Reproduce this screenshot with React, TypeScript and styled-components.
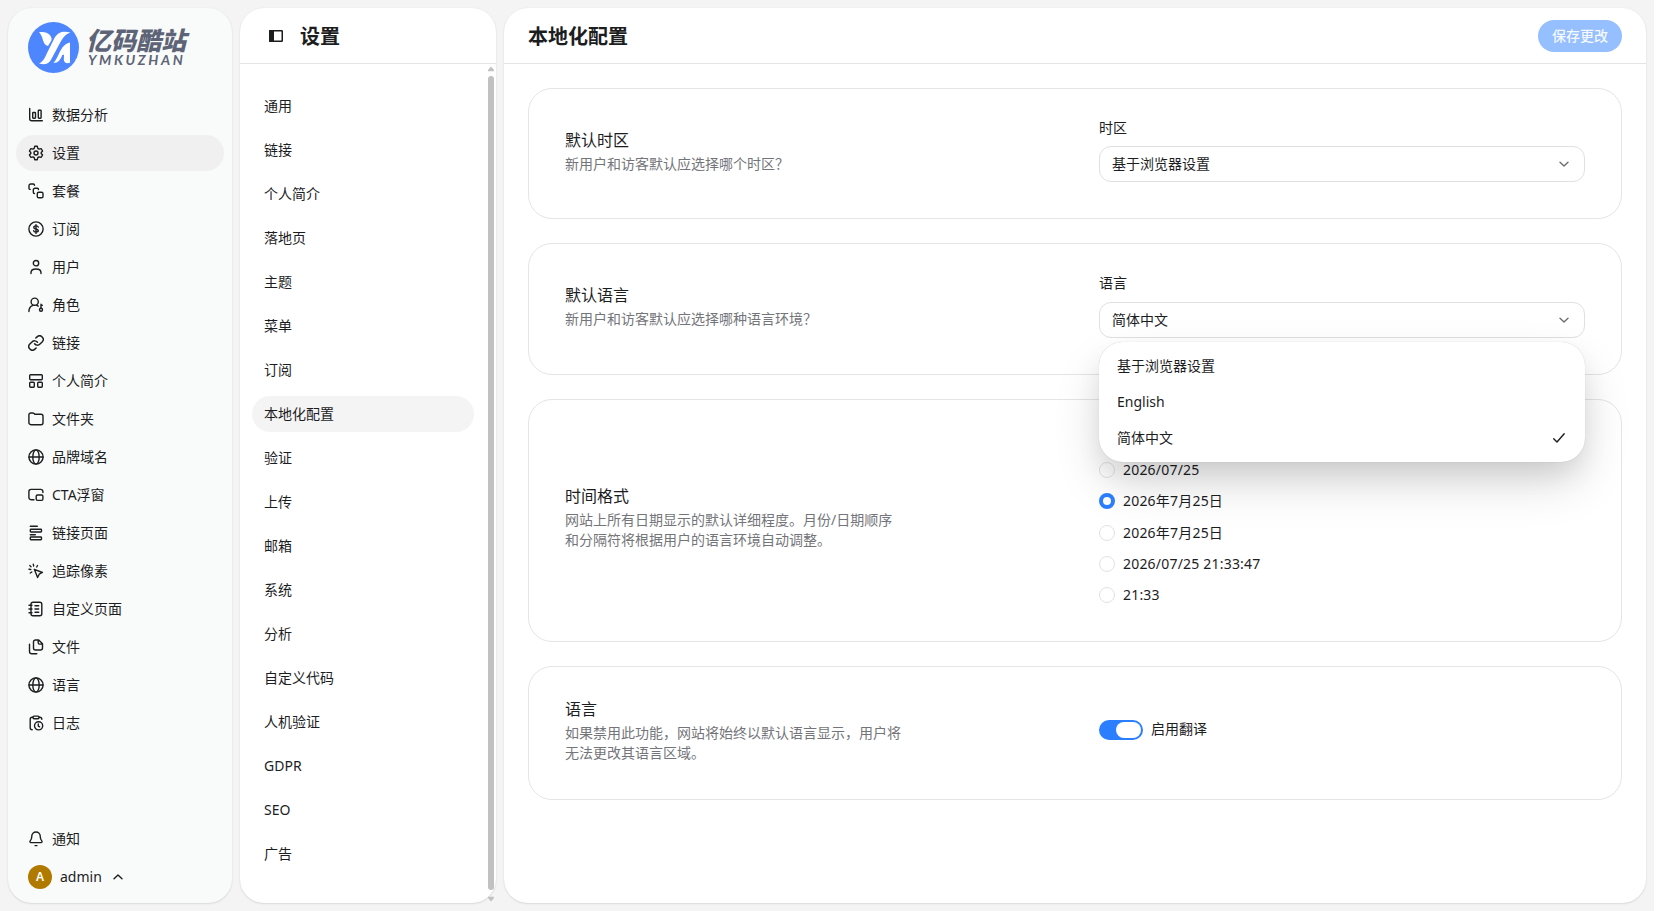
import React from 'react';
import styled, { createGlobalStyle } from 'styled-components';

const GlobalStyle = createGlobalStyle`
  * { box-sizing: border-box; }
  body {
    margin: 0;
    background: #fff;
    color: #1c1d1f;
    font-family: "Noto Sans", "Noto Sans CJK SC", sans-serif;
    font-size: 14px;
    line-height: 20px;
    overflow: hidden;
  }
  button { font: inherit; border: 0; background: none; padding: 0; color: inherit; }
`;

const Shell = styled.div`
  display: flex;
  gap: 8px;
  width: 1654px;
  height: 911px;
  padding: 8px;
  background: #f4f4f4;
`;

const Panel = styled.section<{ $tint?: boolean; $width?: number }>`
  display: flex;
  flex-direction: column;
  ${(p) => (p.$width ? `flex: 0 0 ${p.$width}px;` : 'flex: 1; min-width: 0;')}
  border-radius: 24px;
  background: ${(p) => (p.$tint ? '#f9fbfa' : '#fff')};
  box-shadow: 0 1px 2px rgba(0, 0, 0, 0.1), 0 0 2px rgba(0, 0, 0, 0.06);
`;

/* ---------- primary sidebar ---------- */

const Brand = styled.div`
  display: flex;
  gap: 7px;
  height: 81px;
  padding: 14px 0 0 20px;
`;

const BrandWords = styled.div`
  color: #5d6477;
  padding-top: 4px;
  white-space: nowrap;
`;

const BrandName = styled.div`
  font: italic 900 25px/26px "Noto Sans CJK SC", sans-serif;
`;

const BrandLatin = styled.div`
  font: italic 700 14px/14px Lato, sans-serif;
  letter-spacing: 2.6px;
  padding: 1px 0 0 2px;
`;

const Nav = styled.nav`
  display: flex;
  flex-direction: column;
  gap: 2px;
  padding: 8px 8px 0;
`;

const NavItem = styled.a<{ $active?: boolean }>`
  display: flex;
  align-items: center;
  gap: 8px;
  height: 36px;
  padding: 0 12px;
  border-radius: 18px;
  background: ${(p) => (p.$active ? '#f0f0f0' : 'transparent')};
`;

const SidebarFoot = styled.div`
  display: flex;
  flex-direction: column;
  gap: 2px;
  margin-top: auto;
  padding: 0 8px 8px;
`;

const Avatar = styled.span`
  display: grid;
  place-items: center;
  width: 24px;
  height: 24px;
  border-radius: 50%;
  background: #b07a00;
  color: #fff;
  font-size: 12px;
  font-weight: 600;
`;

const Glyph = styled.svg<{ $size?: number }>`
  flex: none;
  width: ${(p) => p.$size ?? 16}px;
  height: ${(p) => p.$size ?? 16}px;
  fill: none;
  stroke: currentColor;
  stroke-width: 1.4;
  stroke-linecap: round;
  stroke-linejoin: round;
`;

/* ---------- panel header ---------- */

const Header = styled.header<{ $inset: number }>`
  display: flex;
  align-items: center;
  flex: 0 0 56px;
  padding: 0 24px 0 ${(p) => p.$inset}px;
  border-bottom: 1px solid #e4e4e5;
`;

const Title = styled.h1`
  margin: 0;
  padding-top: 2px;
  font-size: 20px;
  line-height: 28px;
  font-weight: 700;
`;

const SaveButton = styled.button`
  margin-left: auto;
  width: 84px;
  height: 32px;
  border-radius: 16px;
  background: #95bfff;
  color: #f4f8ff;
  font-weight: 500;
`;

/* ---------- settings sections ---------- */

const SectionBody = styled.div`
  display: flex;
  flex: 1;
  min-height: 0;
`;

const SectionList = styled.nav`
  display: flex;
  flex-direction: column;
  flex: 1;
  gap: 8px;
  padding: 24px 14px 0 12px;
`;

const SectionItem = styled.a<{ $active?: boolean }>`
  display: flex;
  align-items: center;
  height: 36px;
  padding: 0 12px;
  border-radius: 18px;
  background: ${(p) => (p.$active ? '#f4f4f4' : 'transparent')};
`;

const Scrollbar = styled.div`
  display: flex;
  flex-direction: column;
  align-items: center;
  width: 8px;
  padding: 2px 2px 1px 0;
  color: #c1c1c1;
`;

const Arrow = styled.svg`
  flex: none;
  width: 6px;
  height: 6px;
  fill: currentColor;
`;

const Thumb = styled.div`
  flex: 1;
  width: 6px;
  margin: 4px 0 6px;
  border-radius: 3px;
  background: currentColor;
`;

/* ---------- settings cards ---------- */

const Cards = styled.div`
  display: flex;
  flex-direction: column;
  gap: 24px;
  padding: 24px;
`;

const Card = styled.article<{ $height: number; $lift?: number }>`
  display: grid;
  grid-template-columns: 1fr 1fr;
  column-gap: 48px;
  align-items: center;
  height: ${(p) => p.$height}px;
  padding: 0 36px ${(p) => p.$lift ?? 6}px;
  border: 1px solid #e5e5e6;
  border-radius: 24px;
`;

const CardCopy = styled.div<{ $drop?: number }>`
  padding-top: ${(p) => p.$drop ?? 0}px;
`;

const CardTitle = styled.h2`
  margin: 0 0 2px;
  font-size: 16px;
  line-height: 24px;
  font-weight: 400;
`;

const CardText = styled.p`
  margin: 0;
  max-width: 340px;
  color: #74757a;
`;

const Field = styled.div<{ $gap?: number }>`
  position: relative;
  display: flex;
  flex-direction: column;
  gap: ${(p) => p.$gap ?? 8}px;
`;

const Select = styled.button`
  display: flex;
  align-items: center;
  justify-content: space-between;
  height: 36px;
  padding: 0 14px 0 12px;
  border: 1px solid #e0e0e1;
  border-radius: 12px;
  background: #fff;
`;

const Menu = styled.div`
  position: absolute;
  z-index: 1;
  top: 100%;
  left: 0;
  right: 0;
  margin-top: 4px;
  padding: 6px;
  border-radius: 24px;
  background: #fff;
  box-shadow: 0 0 1px rgba(0, 0, 0, 0.22), 0 14px 28px -4px rgba(0, 0, 0, 0.09),
    0 22px 50px -4px rgba(0, 0, 0, 0.16);
`;

const MenuItem = styled.div`
  display: flex;
  align-items: center;
  justify-content: space-between;
  height: 36px;
  padding: 0 13px 0 12px;
`;

const RadioGroup = styled.div`
  display: flex;
  flex-direction: column;
  gap: 11.25px;
  padding-top: 32.25px;
`;

const RadioRow = styled.label`
  display: flex;
  align-items: center;
  gap: 8px;
  height: 20px;
  letter-spacing: 0.2px;
`;

const RadioDot = styled.span<{ $checked?: boolean }>`
  width: 16px;
  height: 16px;
  border-radius: 50%;
  background: #fff;
  border: ${(p) => (p.$checked ? '4.5px solid #2b7fff' : '1px solid #e2e2e3')};
`;

const SwitchRow = styled.label`
  display: flex;
  align-items: center;
  gap: 8px;
`;

const SwitchLabel = styled.span`
  padding-bottom: 2px;
`;

const Switch = styled.span`
  display: flex;
  justify-content: flex-end;
  width: 44px;
  height: 20px;
  padding: 2px;
  border-radius: 10px;
  background: #2b7fff;
`;

const Knob = styled.span`
  width: 25px;
  border-radius: 8px;
  background: #fff;
`;

/* ---------- icons ---------- */

const globe = (
  <>
    <circle cx="8" cy="8" r="7.1" />
    <ellipse cx="8" cy="8" rx="3.2" ry="7.1" />
    <path d="M1 8h14" />
  </>
);

const icons: Record<string, React.ReactNode> = {
  chart: (
    <>
      <path d="M1.700 1.500v10.200a2 2 0 0 0 2 2h10.600" />
      <rect x="4.700" y="5.500" width="2.800" height="5.700" rx=".6" />
      <rect x="10.300" y="3.200" width="2.800" height="8" rx=".6" />
    </>
  ),
  gear: (
    <>
      <path d="M6.700 1.300h2.600l.5 2 1.300.8 2-.5 1.500 2.400-1.400 1.500v1l1.400 1.500-1.500 2.400-2-.5-1.300.8-.5 2H6.700l-.5-2-1.300-.8-2 .5L1.400 10l1.400-1.500v-1L1.400 6l1.500-2.400 2 .5 1.300-.8z" />
      <circle cx="8" cy="8" r="2" />
    </>
  ),
  plans: (
    <>
      <path d="M1 5.200V2.700A1.700 1.700 0 0 1 2.700 1h2.600A1.200 1.200 0 0 1 6.500 2.200M1 5.200a1.200 1.200 0 0 0 1.200 1.200" />
      <path d="M5.300 9.300V7a1.700 1.700 0 0 1 1.700-1.700h2.300a1.200 1.200 0 0 1 1.200 1.200M5.300 9.300a1.200 1.200 0 0 0 1.200 1.200" />
      <rect x="9.300" y="9.300" width="5.700" height="5.500" rx="1.400" />
    </>
  ),
  dollar: (
    <>
      <circle cx="8" cy="8" r="7.1" />
      <path d="M10.300 6.100C10 5.200 9.100 4.900 8 4.900c-1.300 0-2.200.6-2.200 1.500 0 2.200 4.500 1 4.500 3.200 0 .9-1 1.500-2.300 1.500-1.200 0-2.200-.4-2.400-1.400M8 3.600v8.800" />
    </>
  ),
  user: (
    <>
      <circle cx="8" cy="4.200" r="2.700" />
      <path d="M3 14.500v-.8c0-2.400 2-3.700 5-3.700s5 1.300 5 3.700v.8" />
    </>
  ),
  role: (
    <>
      <circle cx="6.700" cy="4.700" r="3.600" />
      <path d="M.9 14.500c0-3.200 1.700-5.300 4-6.200M8.700 8.200l1.500 1" />
      <circle cx="13" cy="12.700" r="1.500" />
      <path d="M13 11V7.200M13 8.300h1.300" />
    </>
  ),
  link: (
    <g transform="translate(-.64 -.64) scale(.72)" strokeWidth="2">
      <path d="M10 13a5 5 0 0 0 7.540.54l3-3a5 5 0 0 0-7.070-7.070l-1.720 1.710" />
      <path d="M14 11a5 5 0 0 0-7.540-.54l-3 3a5 5 0 0 0 7.070 7.070l1.710-1.710" />
    </g>
  ),
  cells: (
    <>
      <rect x="1.700" y="1.700" width="12.600" height="5" rx=".9" />
      <rect x="1.700" y="9.200" width="4.600" height="5" rx=".9" />
      <rect x="9.700" y="9.200" width="4.600" height="5" rx=".9" />
    </>
  ),
  folder: (
    <path d="M.9 4A2 2 0 0 1 2.900 2h1.700c.6 0 1.100.2 1.500.6l.7.700h6.200a2 2 0 0 1 2 2v6.400a2 2 0 0 1-2 2H2.900a2 2 0 0 1-2-2z" />
  ),
  globe,
  overlay: (
    <>
      <path d="M6 12.700H3a2.100 2.100 0 0 1-2.100-2.100V4.500A2.100 2.100 0 0 1 3 2.400h9.800a2.100 2.100 0 0 1 2.100 2.100v1" />
      <rect x="8.200" y="8" width="6.700" height="5.400" rx="1.300" />
    </>
  ),
  rows: (
    <>
      <path d="M2.300 1.200h7M2.300 9.700h5" />
      <rect x="2.300" y="4.200" width="11.200" height="2.800" rx=".7" />
      <rect x="2.300" y="12" width="11.200" height="2.800" rx=".7" />
    </>
  ),
  cursor: (
    <>
      <path d="m6.300 6.300 8.100 3.200-3.200 1.700-1.600 3.300z" />
      <path d="M5.300 1.300 5.700 3M9.500 2.500 8.700 4M1.800 2.600 3 3.700M1 6.300l1.800.2M3.800 9l-1.500 1" />
    </>
  ),
  notebook: (
    <>
      <rect x="3" y="1.200" width="10.800" height="13.600" rx="2" />
      <path d="M1 4.300h3M1 8h3M1 11.700h3M7 4.700h3.700M7 8h3.700M7 11.300h3.700" />
    </>
  ),
  files: (
    <>
      <path d="M5.500 3A2 2 0 0 1 7.500 1h3.200l3.800 3.800V9a2 2 0 0 1-2 2h-5a2 2 0 0 1-2-2zM10.200 1.200v2.600c0 .8.500 1.300 1.300 1.300h2.700" />
      <path d="M1.500 5.200v7.300a2.300 2.300 0 0 0 2.300 2.300h5" />
    </>
  ),
  log: (
    <>
      <path d="M5 2.300H4.200a2 2 0 0 0-2 2v8.500a2 2 0 0 0 2 2M11 2.300h.8a2 2 0 0 1 2 2" />
      <rect x="5" y="1.100" width="6" height="2.700" rx="1" />
      <circle cx="10.600" cy="10.800" r="4.100" />
      <path d="M10.300 8.900v2.200l1.300.7" />
    </>
  ),
  bell: (
    <>
      <path d="M3.800 5.200a4.200 4.200 0 0 1 8.400 0c0 2.500.6 3.500 1.600 4.700.6.800.2 1.700-.8 1.700H3c-1 0-1.400-.9-.8-1.700 1-1.200 1.600-2.200 1.600-4.700z" />
      <path d="M7 14.600h2" />
    </>
  ),
};

const primaryNav: [string, string][] = [
  ['chart', '数据分析'],
  ['gear', '设置'],
  ['plans', '套餐'],
  ['dollar', '订阅'],
  ['user', '用户'],
  ['role', '角色'],
  ['link', '链接'],
  ['cells', '个人简介'],
  ['folder', '文件夹'],
  ['globe', '品牌域名'],
  ['overlay', 'CTA浮窗'],
  ['rows', '链接页面'],
  ['cursor', '追踪像素'],
  ['notebook', '自定义页面'],
  ['files', '文件'],
  ['globe', '语言'],
  ['log', '日志'],
];

const sections = [
  '通用', '链接', '个人简介', '落地页', '主题', '菜单', '订阅', '本地化配置', '验证',
  '上传', '邮箱', '系统', '分析', '自定义代码', '人机验证', 'GDPR', 'SEO', '广告',
];

const formats = ['2026/07/25', '2026年7月25日', '2026年7月25日', '2026/07/25 21:33:47', '21:33'];

const Icon = ({ name }: { name: string }) => (
  <Glyph viewBox="0 0 16 16">{icons[name]}</Glyph>
);

const Chevron = ({ up }: { up?: boolean }) => (
  <Glyph viewBox="0 0 12 12" $size={12}>
    <path d={up ? 'M2 7.800 6 4l4 3.800' : 'M2 4.200 6 8l4-3.800'} />
  </Glyph>
);

const MutedChevron = styled.span`
  display: flex;
  color: #6d6e72;
`;

const UserName = styled.span`
  margin-right: 2px;
`;

const PanelToggle = styled.svg`
  width: 14px;
  height: 12px;
  margin-right: 17px;
`;

const Logo = () => (
  <svg width="51" height="51" viewBox="0 0 51 51">
    <circle cx="25.500" cy="25.500" r="25.500" fill="#4d86ff" />
    <g fill="#fff">
      <path d="M11 10.200c4-.8 8.500-.2 10.800 2.800 1.600 2.200 2.200 4 1.600 5.500L20 24c-3.500-1.200-4.300-3.400-5.300-6.800-.8-2.900-1.700-5-3.700-7z" />
      <path d="M42.500 10.700c-6.500-2-12.500-1-16 5.300L19.500 30c-2.300 5-4 9.500-8.500 11.500 5 1.700 9.500.8 12-3.800L32.500 20c2.500-4.500 5-8 10-9.300z" />
      <path d="M42 20.500v20.300c-3.500 1-6.200-.3-6.200-3.300l.2-4.700-1.800.2c-1.500 4.500-4 8-8.700 8 2.500-2.500 4-6.500 6-10.500 2.500-5 5.500-9.200 10.500-10z" />
    </g>
  </svg>
);

export default function App() {
  return (
    <>
      <GlobalStyle />
      <Shell>
        <Panel $tint $width={224}>
          <Brand>
            <Logo />
            <BrandWords>
              <BrandName>亿码酷站</BrandName>
              <BrandLatin>YMKUZHAN</BrandLatin>
            </BrandWords>
          </Brand>
          <Nav>
            {primaryNav.map(([icon, label]) => (
              <NavItem key={label} $active={label === '设置'}>
                <Icon name={icon} />
                {label}
              </NavItem>
            ))}
          </Nav>
          <SidebarFoot>
            <NavItem>
              <Icon name="bell" />
              通知
            </NavItem>
            <NavItem>
              <Avatar>A</Avatar>
              <UserName>admin</UserName>
              <Chevron up />
            </NavItem>
          </SidebarFoot>
        </Panel>

        <Panel $width={256}>
          <Header $inset={29}>
            <PanelToggle viewBox="0 0 14 12">
              <rect x=".75" y=".75" width="12.500" height="10.500" rx=".5" fill="none" stroke="#1c1d1f" strokeWidth="1.500" />
              <rect width="5" height="12" rx=".8" fill="#1c1d1f" />
            </PanelToggle>
            <Title>设置</Title>
          </Header>
          <SectionBody>
            <SectionList>
              {sections.map((label) => (
                <SectionItem key={label} $active={label === '本地化配置'}>{label}</SectionItem>
              ))}
            </SectionList>
            <Scrollbar>
              <Arrow viewBox="0 0 6 6"><path d="M3 .5 6 4v1.300H0V4z" /></Arrow>
              <Thumb />
              <Arrow viewBox="0 0 6 6"><path d="M3 5.500 6 2V.7H0V2z" /></Arrow>
            </Scrollbar>
          </SectionBody>
        </Panel>

        <Panel>
          <Header $inset={24}>
            <Title>本地化配置</Title>
            <SaveButton>保存更改</SaveButton>
          </Header>
          <Cards>
            <Card $height={131} $lift={7}>
              <CardCopy $drop={2}>
                <CardTitle>默认时区</CardTitle>
                <CardText>新用户和访客默认应选择哪个时区？</CardText>
              </CardCopy>
              <Field>
                <span>时区</span>
                <Select>
                  基于浏览器设置
                  <MutedChevron><Chevron /></MutedChevron>
                </Select>
              </Field>
            </Card>
            <Card $height={132} $lift={7}>
              <CardCopy $drop={1}>
                <CardTitle>默认语言</CardTitle>
                <CardText>新用户和访客默认应选择哪种语言环境？</CardText>
              </CardCopy>
              <Field $gap={9}>
                <span>语言</span>
                <Select>
                  简体中文
                  <MutedChevron><Chevron /></MutedChevron>
                </Select>
                <Menu>
                  <MenuItem>基于浏览器设置</MenuItem>
                  <MenuItem>English</MenuItem>
                  <MenuItem>
                    简体中文
                    <Glyph viewBox="0 0 14 14" $size={14}><path d="M1.700 7.700 5 11l7.200-8.200" /></Glyph>
                  </MenuItem>
                </Menu>
              </Field>
            </Card>
            <Card $height={243} $lift={8}>
              <CardCopy>
                <CardTitle>时间格式</CardTitle>
                <CardText>网站上所有日期显示的默认详细程度。月份/日期顺序和分隔符将根据用户的语言环境自动调整。</CardText>
              </CardCopy>
              <RadioGroup>
                {formats.map((label, i) => (
                  <RadioRow key={i}>
                    <RadioDot $checked={i === 1} />
                    {label}
                  </RadioRow>
                ))}
              </RadioGroup>
            </Card>
            <Card $height={134}>
              <CardCopy>
                <CardTitle>语言</CardTitle>
                <CardText>如果禁用此功能，网站将始终以默认语言显示，用户将无法更改其语言区域。</CardText>
              </CardCopy>
              <SwitchRow>
                <Switch><Knob /></Switch>
                <SwitchLabel>启用翻译</SwitchLabel>
              </SwitchRow>
            </Card>
          </Cards>
        </Panel>
      </Shell>
    </>
  );
}
